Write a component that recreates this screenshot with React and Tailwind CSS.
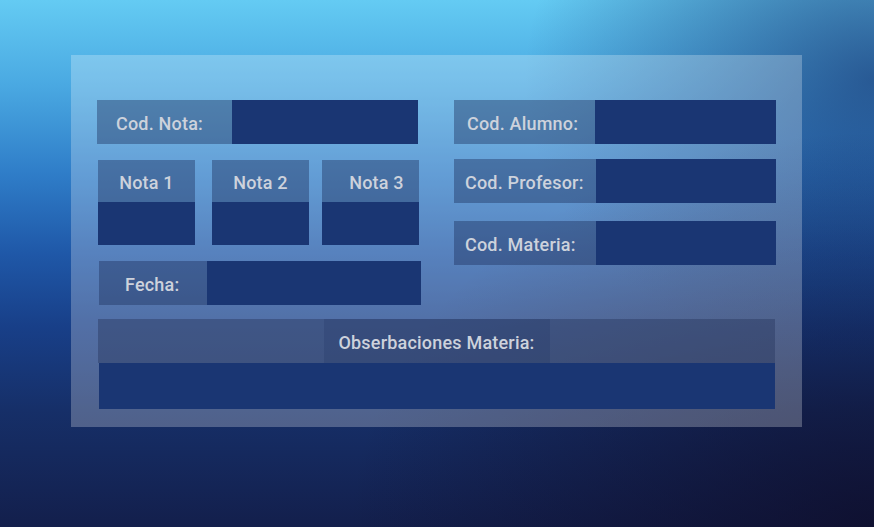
import React from "react";

const label = "flex items-center bg-[rgba(28,48,92,0.42)] text-[#cdd2dc] text-[18px] font-medium tracking-[0.2px]";
const input = "bg-[#1a3673]";

function Field({ text, labelW, inputW, pl, className = "" }) {
    return (
        <div className={`flex h-[44px] ${className}`}>
            <div className={`${label} ${labelW} ${pl} pt-[2px]`}>{text}</div>
            <div className={`${input} ${inputW}`}></div>
        </div>
    );
}

function Nota({ n, className = "" }) {
    return (
        <div className={`flex flex-col w-[97px] ${className}`}>
            <div className={`${label} h-[42px] justify-center pt-[2px]`}>Nota {n}</div>
            <div className={`${input} h-[43px]`}></div>
        </div>
    );
}

export default function App() {
    return (
        <div className="w-[874px] h-[527px] overflow-hidden pt-[55px] pl-[71px] bg-[radial-gradient(ellipse_60%_75%_at_100%_100%,rgba(14,12,40,0.75),rgba(14,12,40,0)),radial-gradient(ellipse_40%_55%_at_100%_15%,rgba(25,55,115,0.7),rgba(25,55,115,0)),linear-gradient(to_bottom,#64cbf3_0%,#4aa9e2_16%,#2f7dc8_33%,#1f58a8_48%,#183f88_62%,#162f68_78%,#131f4c_100%)]" style={{ fontFamily: "Roboto, 'Noto Sans', sans-serif" }}>
            <div className="w-[731px] h-[372px] bg-white/25 pt-[45px] pl-[26px]">
                <div className="flex">
                    <div className="flex flex-col w-[324px]">
                        <Field text="Cod. Nota:" labelW="w-[135px]" inputW="w-[186px]" pl="pl-[19px]" />
                        <div className="flex mt-[16px] ml-[1px]">
                            <Nota n={1} />
                            <Nota n={2} className="ml-[17px]" />
                            <Nota n={3} className="ml-[13px] [&>div:first-child]:pl-[12px]" />
                        </div>
                        <Field text="Fecha:" labelW="w-[108px]" inputW="w-[214px]" pl="pl-[26px]" className="mt-[16px] ml-[2px]" />
                    </div>
                    <div className="flex flex-col ml-[33px]">
                        <Field text="Cod. Alumno:" labelW="w-[141px]" inputW="w-[181px]" pl="pl-[13px]" />
                        <Field text="Cod. Profesor:" labelW="w-[142px]" inputW="w-[180px]" pl="pl-[11px]" className="mt-[15px]" />
                        <Field text="Cod. Materia:" labelW="w-[142px]" inputW="w-[180px]" pl="pl-[11px]" className="mt-[18px]" />
                    </div>
                </div>
                <div className="flex flex-col w-[677px] mt-[14px] ml-[1px]">
                    <div className="flex justify-center h-[44px] bg-[rgba(40,55,95,0.45)]">
                        <div className={`${label} w-[226px] justify-center pt-[2px] bg-[rgba(30,50,100,0.25)]`}>Obserbaciones Materia:</div>
                    </div>
                    <div className={`${input} h-[46px] ml-[1px]`}></div>
                </div>
            </div>
        </div>
    );
}
